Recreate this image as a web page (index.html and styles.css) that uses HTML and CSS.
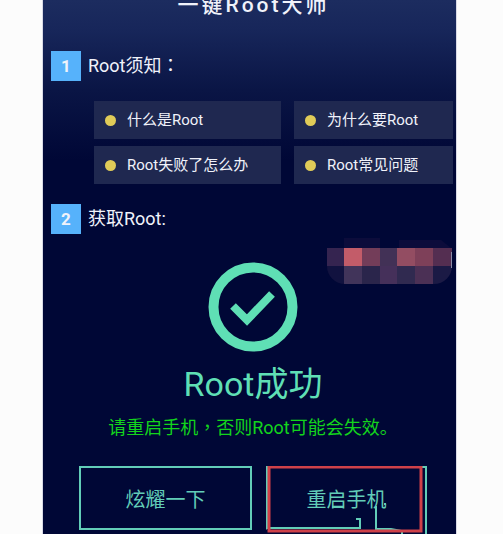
FILE: index.html
```
<!DOCTYPE html>
<html lang="zh-CN">
<head>
    <meta charset="UTF-8">
    <meta name="viewport" content="width=device-width, initial-scale=1.0">
    <title>一键Root大师</title>
    <link rel="stylesheet" href="styles.css">
</head>
<body>

    <main class="phone">
        <h1 class="title">一键Root大师</h1>

        <h2 class="step"><span class="step-number">1</span><span>Root须知<span class="mark" lang="zh-TW">：</span></span></h2>
        <nav class="topics">
            <a class="topic" href="#">什么是Root</a>
            <a class="topic" href="#">为什么要Root</a>
            <a class="topic" href="#">Root失败了怎么办</a>
            <a class="topic" href="#">Root常见问题</a>
        </nav>

        <h2 class="step"><span class="step-number">2</span><span>获取Root:</span></h2>

        <section class="result">
            <!-- Blurred out account badge -->
            <svg class="mosaic" width="126" height="46" viewBox="0 0 126 46" aria-hidden="true">
                <defs>
                    <clipPath id="pill"><rect width="125" height="46" rx="18"/></clipPath>
                </defs>
                <path fill="#0c0c3b" d="M17 0h36v10H17zM72 2h42l10 8H72z"/>
                <path fill="#352450" d="M0 10h17v18H0z"/>
                <path fill="#c35c69" d="M17 10h18v18H17z"/>
                <path fill="#733d59" d="M35 10h18v18H35z"/>
                <path fill="#423156" d="M53 10h17v18H53z"/>
                <path fill="#934d62" d="M70 10h18v18H70z"/>
                <path fill="#7e4059" d="M88 10h18v18H88z"/>
                <path fill="#542e51" d="M106 10h19v18h-19z"/>
                <g clip-path="url(#pill)">
                    <path fill="#11123f" d="M0 28h17v18H0z"/>
                    <path fill="#41345a" d="M17 28h18v18H17z"/>
                    <path fill="#2a254b" d="M35 28h18v18H35z"/>
                    <path fill="#45305a" d="M53 28h17v18H53z"/>
                    <path fill="#302a50" d="M70 28h18v18H70z"/>
                    <path fill="#4b3055" d="M88 28h18v18H88z"/>
                    <path fill="#1b1a45" d="M106 28h19v18h-19z"/>
                </g>
                <path stroke="#8c8ca8" d="M124.500 14v16"/>
            </svg>

            <svg class="check" width="90" height="90" viewBox="0 0 90 90" aria-hidden="true">
                <circle cx="45" cy="45" r="39.500" fill="none" stroke="#5fdfb5" stroke-width="10"/>
                <path d="M25 44l14 14 25-26" fill="none" stroke="#5fdfb5" stroke-width="8"/>
            </svg>
            <p class="status">Root成功</p>
            <p class="hint">请重启手机<span class="mark" lang="zh-TW">，</span>否则Root可能会失效。</p>

            <div class="actions">
                <button class="action" type="button">炫耀一下</button>
                <div class="action-marked">
                    <button class="action action-open" type="button">重启手机</button>
                    <svg class="marks" width="162" height="70" viewBox="0 0 162 70" aria-hidden="true">
                        <path d="M1 62h93v-9h-4M110 40v23h15l11 2v5M66 41h12M160 60v10M118 38h2" fill="none" stroke="#62cdb8" stroke-width="2"/>
                        <rect x="3" y="1" width="152" height="64" fill="none" stroke="#cf4149" stroke-width="3"/>
                    </svg>
                </div>
            </div>
        </section>
    </main>

</body>
</html>
```

FILE: styles.css
```
* {
    box-sizing: border-box;
}

body {
    margin: 0;
    background-color: #fcfcfc;
    font-family: Roboto, "Noto Sans CJK SC", sans-serif;
}

.phone {
    margin: 0 46px 0 42px;
    min-height: 100vh;
    overflow: hidden;
    border: solid #d9dae6;
    border-width: 0 1px;
    background: #000736 linear-gradient(#1c2c5f 0, #17265a 30px, #0a1545 90px, #000736 160px) no-repeat;
    color: #f0f2fa;
}

.title {
    margin: -9px 0 0;
    padding-left: 8px;
    font-size: 21px;
    line-height: 28px;
    font-weight: 500;
    letter-spacing: 3px;
    text-align: center;
}

.step {
    display: flex;
    align-items: center;
    gap: 7px;
    margin: 20px 8px 0;
    font-size: 18px;
    line-height: 30px;
    font-weight: 400;
}

.title + .step {
    margin-top: 32px;
}

.step-number {
    width: 30px;
    background-color: #56b2fb;
    font-size: 17px;
    font-weight: 700;
    text-align: center;
}

/* Full-width punctuation centred in its box */
.mark {
    font-family: "Noto Sans CJK TC", sans-serif;
    line-height: 1;
}

.topics {
    display: grid;
    grid-template-columns: 187fr 159fr;
    gap: 7px 13px;
    margin: 20px 3px 0 51px;
}

.topic {
    display: flex;
    align-items: center;
    gap: 11px;
    padding-left: 11px;
    background-color: #1f2850;
    color: #f0f2fa;
    font-size: 15px;
    line-height: 38px;
    text-decoration: none;
}

.topic::before {
    content: "";
    width: 11px;
    height: 11px;
    border-radius: 50%;
    background-color: #e0cb58;
}

.result {
    position: relative;
    padding: 28px 29px 0 36px;
    text-align: center;
}

.mosaic {
    position: absolute;
    top: 4px;
    right: 3px;
}

.check {
    display: block;
    margin: 0 auto;
}

.status {
    margin: 10px 0 0;
    color: #5fdfb5;
    font-size: 34px;
    line-height: 44px;
}

.hint {
    margin: 8px 0 0;
    color: #13d41c;
    font-size: 18px;
    line-height: 28px;
}

.actions {
    display: grid;
    grid-template-columns: 174fr 162fr;
    gap: 14px;
    margin-top: 24px;
}

.action {
    width: 100%;
    height: 64px;
    padding: 0;
    border: 2px solid #62cdb8;
    background: none;
    color: #62cdb8;
    font-family: inherit;
    font-size: 20px;
    cursor: pointer;
}

.action-marked {
    position: relative;
}

.action-open {
    border-bottom-color: transparent;
}

.marks {
    position: absolute;
    top: 0;
    left: 0;
    pointer-events: none;
}
```
